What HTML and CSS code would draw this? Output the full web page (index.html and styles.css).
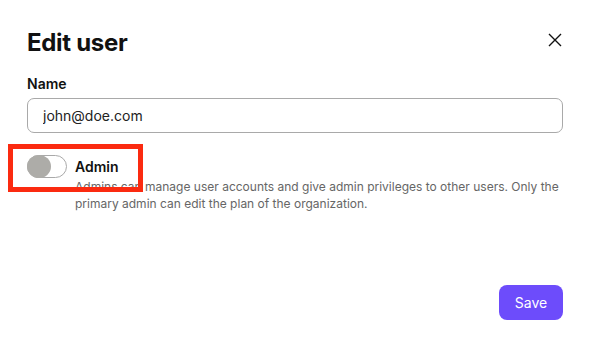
FILE: index.html
```html
<!DOCTYPE html>
<html lang="en">
<head>
    <meta charset="UTF-8">
    <title>Edit user</title>
    <link rel="stylesheet" href="styles.css">
</head>
<body>
    <div class="modal">
        <div class="modal-header">
            <h2>Edit user</h2>
            <button class="close-btn" aria-label="Close">
                <svg width="14" height="14" viewBox="0 0 14 14" fill="none" stroke="#111" stroke-width="1.4">
                    <path d="M1 1 L13 13 M13 1 L1 13"/>
                </svg>
            </button>
        </div>

        <div class="form-group">
            <label for="name">Name</label>
            <input type="text" id="name" value="john@doe.com">
        </div>

        <div class="toggle-row">
            <span class="toggle"><span class="knob"></span></span>
            <div class="toggle-text">
                <div class="toggle-label">Admin</div>
                <p>Admins can manage user accounts and give admin privileges to other users. Only the primary admin can edit the plan of the organization.</p>
            </div>
            <div class="highlight"></div>
        </div>

        <div class="modal-footer">
            <button class="btn">Save</button>
        </div>
    </div>
</body>
</html>
```

FILE: styles.css
```css
* {
    margin: 0;
    padding: 0;
    box-sizing: border-box;
}

body {
    font-family: Inter, 'Noto Sans', sans-serif;
    background: #fff;
    color: #111;
}

.modal {
    width: 594px;
    height: 342px;
    padding: 29px 31px 22px 27px;
    display: flex;
    flex-direction: column;
}

.modal-header {
    display: flex;
    justify-content: space-between;
    align-items: flex-start;
    margin-bottom: 18px;
}

.modal-header h2 {
    font-size: 24px;
    font-weight: 700;
    line-height: 28px;
    letter-spacing: -0.3px;
    color: #111;
}

.close-btn {
    background: none;
    border: none;
    width: 14px;
    height: 14px;
    margin: 4px 1px 0 0;
    cursor: pointer;
    display: flex;
}

.form-group label {
    display: block;
    font-size: 14px;
    font-weight: 600;
    line-height: 18px;
    margin-bottom: 5px;
}

.form-group input {
    width: 100%;
    height: 35px;
    padding: 0 15px;
    border: 1px solid #a9a9a9;
    border-radius: 7px;
    font-family: inherit;
    font-size: 14px;
    color: #222;
    outline: none;
}

.toggle-row {
    position: relative;
    display: flex;
    gap: 8px;
    margin-top: 22px;
}

.toggle {
    flex: none;
    width: 40px;
    height: 23px;
    border: 1px solid #a9a9a9;
    border-radius: 12px;
    background: #fff;
    position: relative;
}

.knob {
    position: absolute;
    left: -1px;
    top: -1px;
    width: 24px;
    height: 23px;
    border-radius: 50%;
    background: #adaca8;
}

.toggle-label {
    font-size: 14px;
    font-weight: 600;
    line-height: 23px;
}

.toggle-text p {
    font-size: 12px;
    line-height: 17px;
    color: #666;
}

.highlight {
    position: absolute;
    left: -19px;
    top: -11px;
    width: 135px;
    height: 48px;
    border: 5px solid #fb2a10;
}

.modal-footer {
    margin-top: auto;
    display: flex;
    justify-content: flex-end;
}

.btn {
    width: 64px;
    height: 35px;
    background: #6d4cfb;
    color: #fff;
    border: none;
    border-radius: 8px;
    font-family: inherit;
    font-size: 14px;
    cursor: pointer;
}
```
